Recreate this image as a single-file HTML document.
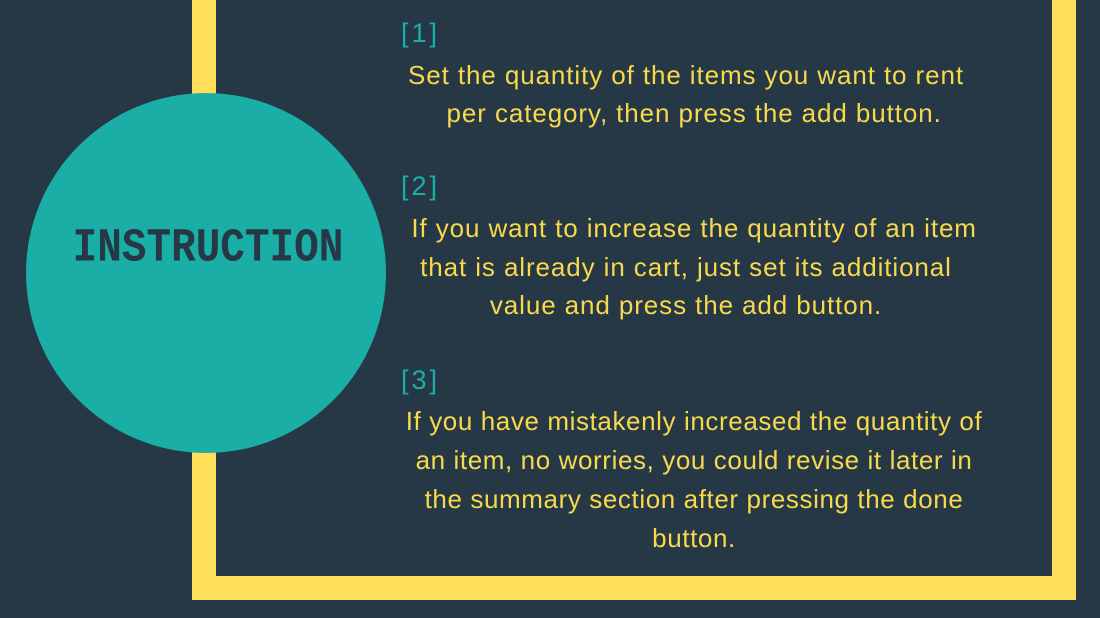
<!DOCTYPE html>
<html><head><style>
body{margin:0;width:1100px;height:618px;background:#263746;position:relative;overflow:hidden;font-family:"Liberation Sans",sans-serif}
.y{position:absolute;background:#ffdf5a}
.c{position:absolute;left:26px;top:93px;width:360px;height:360px;border-radius:50%;background:#1aaea6}
.t{position:absolute;left:60px;top:226px;width:296px;text-align:center;font-family:"Liberation Mono",monospace;font-weight:bold;font-size:41px;color:#263746;transform:scaleY(1.15);letter-spacing:0px}
.l{position:absolute;left:336px;width:700px;text-align:center;color:#f7d94c;font-size:26px;letter-spacing:0.9px;line-height:30px}
.s{left:344px;letter-spacing:0.6px}
.n{position:absolute;left:401px;color:#1aaea6;font-size:27px;letter-spacing:3px;line-height:30px}
</style></head><body>
<div class="y" style="left:192px;top:0;width:24px;height:600px"></div>
<div class="y" style="left:1052px;top:0;width:24px;height:600px"></div>
<div class="y" style="left:192px;top:576px;width:884px;height:24px"></div>
<div class="c"></div>
<div class="t">INSTRUCTION</div>
<div class="n" style="top:18px">[1]</div>
<div class="l" style="top:60px">Set the quantity of the items you want to rent</div>
<div class="l" style="top:98px">&nbsp;&nbsp;per category, then press the add button.</div>
<div class="n" style="top:171px">[2]</div>
<div class="l" style="top:213px">&nbsp;&nbsp;If you want to increase the quantity of an item</div>
<div class="l" style="top:252px">that is already in cart, just set its additional</div>
<div class="l" style="top:290px">value and press the add button.</div>
<div class="n" style="top:365px">[3]</div>
<div class="l s" style="top:406px">If you have mistakenly increased the quantity of</div>
<div class="l s" style="top:445px">an item, no worries, you could revise it later in</div>
<div class="l s" style="top:484px">the summary section after pressing the done</div>
<div class="l s" style="top:523px">button.</div>
</body></html>
